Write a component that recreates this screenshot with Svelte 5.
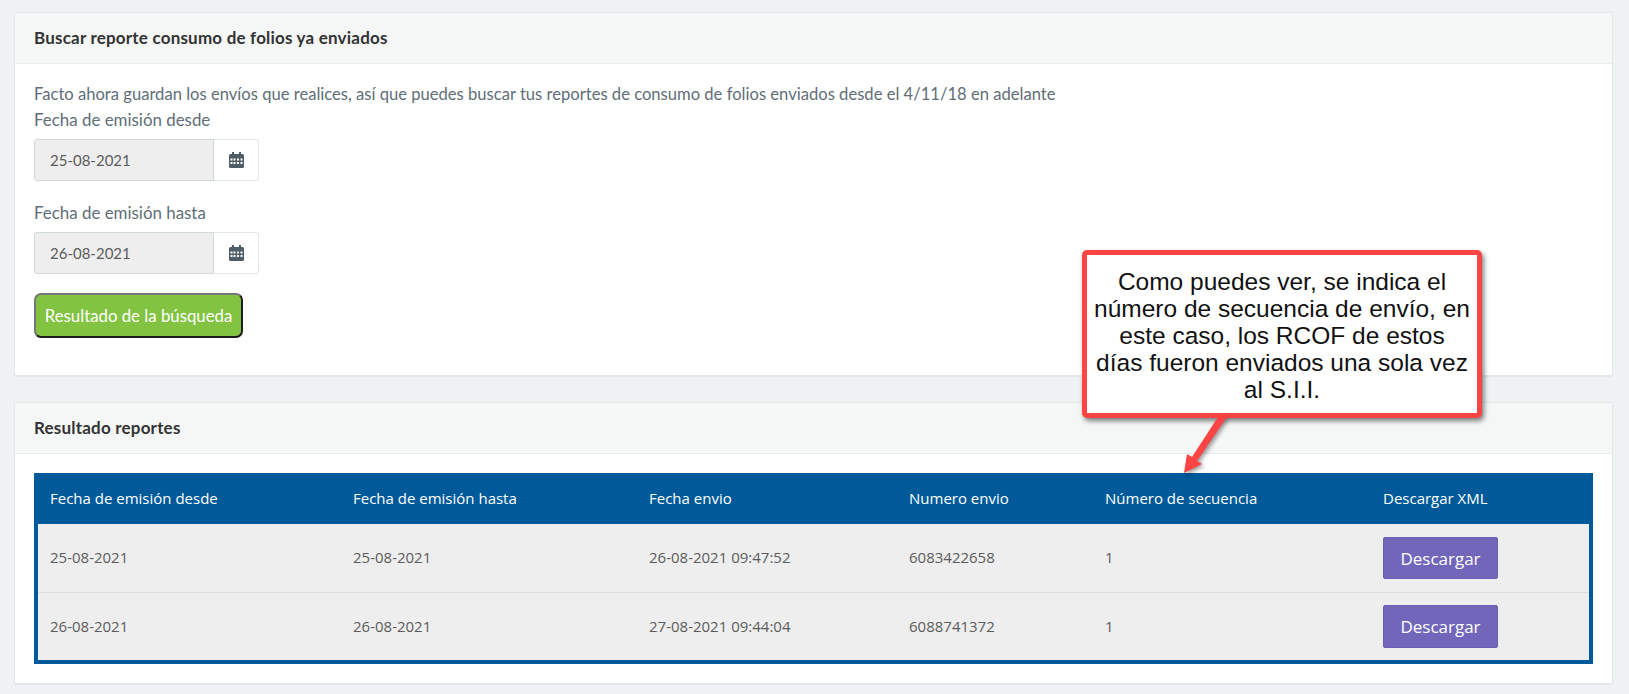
<script lang="ts">
  // Report rows
  const columns = ['Fecha de emisión desde', 'Fecha de emisión hasta', 'Fecha envio', 'Numero envio', 'Número de secuencia', 'Descargar XML'];
  const rows = [
    { desde: '25-08-2021', hasta: '25-08-2021', envio: '26-08-2021 09:47:52', numero: '6083422658', secuencia: '1' },
    { desde: '26-08-2021', hasta: '26-08-2021', envio: '27-08-2021 09:44:04', numero: '6088741372', secuencia: '1' },
  ];
  const dateFields = [
    { label: 'Fecha de emisión desde', value: '25-08-2021' },
    { label: 'Fecha de emisión hasta', value: '26-08-2021' },
  ];
</script>

<div class="page">
  <section class="card">
    <h2 class="card-header">Buscar reporte consumo de folios ya enviados</h2>
    <div class="card-body search-body">
      <p class="intro">Facto ahora guardan los envíos que realices, así que puedes buscar tus reportes de consumo de folios enviados desde el 4/11/18 en adelante</p>
      {#each dateFields as field}
        <div class="form-group">
          <div class="form-label">{field.label}</div>
          <div class="input-group">
            <div class="date-input">{field.value}</div>
            <div class="addon">
              <svg width="15" height="16" viewBox="0 0 15 16" aria-hidden="true">
                <path fill="#4f5d67" fill-rule="evenodd" d="M3 0h2v2h5V0h2v2h1.500A1.500 1.500 0 0 1 15 3.500V14.500A1.500 1.500 0 0 1 13.500 16H1.500A1.500 1.500 0 0 1 0 14.500V3.500A1.500 1.500 0 0 1 1.500 2H3ZM1.500 6.500V8.500H3.500V6.500ZM4.500 6.500V8.500H6.500V6.500ZM8 6.500V8.500H10V6.500ZM11.500 6.500V8.500H13.500V6.500ZM1.500 10V12H3.500V10ZM4.500 10V12H6.500V10ZM8 10V12H10V10ZM11.500 10V12H13.500V10Z"/>
              </svg>
            </div>
          </div>
        </div>
      {/each}
      <button class="search-btn">Resultado de la búsqueda</button>
    </div>
  </section>

  <section class="card results">
    <h2 class="card-header">Resultado reportes</h2>
    <div class="card-body table-body">
      <table>
        <thead>
          <tr>
            {#each columns as col}
              <th>{col}</th>
            {/each}
          </tr>
        </thead>
        <tbody>
          {#each rows as row}
            <tr>
              <td>{row.desde}</td>
              <td>{row.hasta}</td>
              <td>{row.envio}</td>
              <td>{row.numero}</td>
              <td>{row.secuencia}</td>
              <td><button class="download-btn">Descargar</button></td>
            </tr>
          {/each}
        </tbody>
      </table>
    </div>
  </section>

  <!-- annotation drawn on top of the screenshot -->
  <div class="callout">
    Como puedes ver, se indica el<br />
    número de secuencia de envío, en<br />
    este caso, los RCOF de estos<br />
    días fueron enviados una sola vez<br />
    al S.I.I.
  </div>
  <svg class="arrow" width="60" height="70" viewBox="0 0 60 70" aria-hidden="true">
    <path d="M36 2 L45 2 L15 46 L20 49 L2 58 L5 39 L10 42 Z" fill="#fb4444" />
  </svg>
</div>

<style>
  :global(body) {
    margin: 0;
    background: #eef2f3;
    font-family: "Lato", sans-serif;
  }

  .page {
    position: relative;
    height: 694px;
    padding: 12px 16px 0 14px;
    box-sizing: border-box;
    overflow: hidden;
  }

  .card {
    background: #fff;
    border: 1px solid #e3e8ea;
    border-radius: 2px;
    box-shadow: 0 1px 1px rgba(0, 0, 0, 0.05);
    height: 364px;
    box-sizing: border-box;
  }

  .results {
    margin-top: 26px;
    height: 282px;
  }

  .card-header {
    margin: 0;
    height: 48px;
    padding: 0 19px 2px;
    display: flex;
    align-items: center;
    background: #f5f7f7;
    border-bottom: 1px solid #e9edee;
    font-family: "Lato", sans-serif;
    font-size: 17px;
    font-weight: 700;
    letter-spacing: 0.2px;
    color: #333;
  }

  .search-body {
    padding: 18px 19px 0;
  }

  .intro {
    margin: 0;
    font-size: 16.6px;
    line-height: 25px;
    color: #5f6e78;
  }

  .form-group {
    margin-bottom: 19px;
  }

  .form-label {
    font-size: 16.9px;
    line-height: 25px;
    color: #5f6e78;
    margin-bottom: 7px;
  }

  .input-group {
    display: flex;
    width: 225px;
    height: 42px;
  }

  .date-input {
    width: 180px;
    box-sizing: border-box;
    padding-left: 15px;
    display: flex;
    align-items: center;
    background: #eee;
    border: 1px solid #d0dadd;
    border-radius: 3px 0 0 3px;
    font-size: 15px;
    color: #5c5c5c;
  }

  .addon {
    width: 45px;
    box-sizing: border-box;
    display: flex;
    align-items: center;
    justify-content: center;
    background: #fff;
    border: 1px solid #e2e8ea;
    border-left: 0;
    border-radius: 0 3px 3px 0;
  }

  .search-btn {
    display: block;
    width: 209px;
    height: 45px;
    padding: 0;
    margin-top: 18px;
    background: #82c341;
    border: 2px solid;
    border-color: #767676 #1c1c1c #1c1c1c #767676;
    border-radius: 7px;
    color: #fff;
    font-family: "Lato", sans-serif;
    font-size: 16.8px;
  }

  .table-body {
    padding: 19px 19px 0;
  }

  table {
    width: 100%;
    border-collapse: separate;
    border-spacing: 0;
    table-layout: fixed;
    border: 4px solid #005a99;
    border-top: 0;
    background: #eee;
    font-family: "Open Sans", sans-serif;
    font-size: 15px;
  }

  th {
    height: 51px;
    padding: 0 0 2px 12px;
    box-sizing: border-box;
    background: #005a99;
    color: #fff;
    font-weight: 400;
    text-align: left;
  }

  td {
    height: 68px;
    padding: 0 0 2px 12px;
    color: #5c5c5c;
    box-sizing: border-box;
  }

  td:last-child {
    padding-bottom: 0;
  }

  tbody tr + tr td {
    border-top: 1px solid #dcdfe1;
  }

  tbody tr + tr .download-btn {
    height: 43px;
  }

  th:nth-child(1) { width: 303px; }
  th:nth-child(2) { width: 296px; }
  th:nth-child(3) { width: 260px; }
  th:nth-child(4) { width: 196px; }
  th:nth-child(5) { width: 278px; }

  .download-btn {
    width: 115px;
    height: 42px;
    padding: 0;
    background: #7266ba;
    border: 1px solid #6a5eb0;
    border-radius: 2px;
    color: #fff;
    font-family: "Open Sans", sans-serif;
    font-size: 17px;
    vertical-align: middle;
  }

  .callout {
    position: absolute;
    left: 1082px;
    top: 250px;
    width: 400px;
    height: 168px;
    box-sizing: border-box;
    padding: 13px 0 0;
    background: #fff;
    border: 5px solid #fb4444;
    border-radius: 5px;
    box-shadow: 2px 3px 5px rgba(0, 0, 0, 0.5);
    font-family: "Liberation Sans", Arial, sans-serif;
    font-size: 24.5px;
    line-height: 27px;
    color: #111;
    text-align: center;
  }

  .arrow {
    position: absolute;
    left: 1182px;
    top: 415px;
    filter: drop-shadow(2px 2px 2px rgba(0, 0, 0, 0.4));
  }
</style>
